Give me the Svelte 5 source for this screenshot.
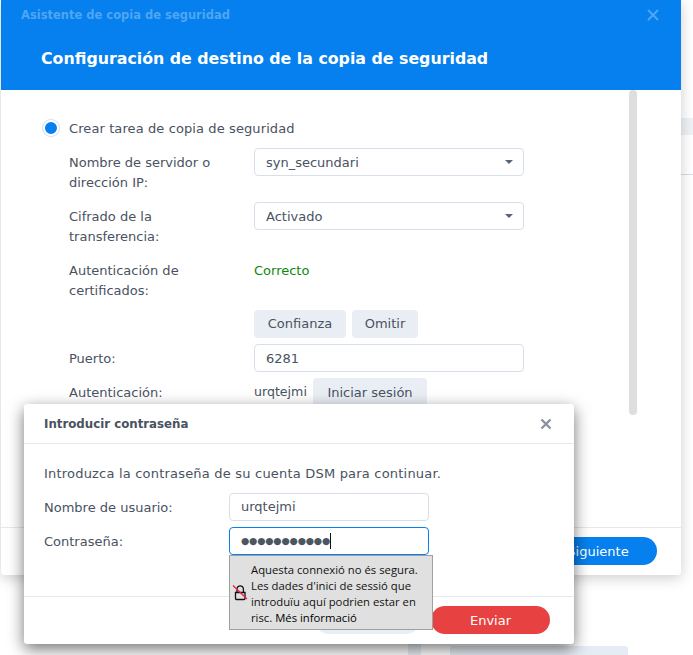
<script>
  const dots = '●'.repeat(11);
</script>

<div class="desk">
  <!-- restos de la ventana de detrás -->
  <div class="bg-strip"></div>
  <div class="bg-line"></div>
  <div class="bg-col"></div>
  <div class="bg-card"></div>

  <section class="wizard">
    <header class="wiz-head">
      <div class="wiz-top">
        <span>Asistente de copia de seguridad</span>
        <svg width="12" height="12" viewBox="0 0 12 12"><path d="M1 1l10 10M11 1L1 11" /></svg>
      </div>
      <h1>Configuración de destino de la copia de seguridad</h1>
    </header>

    <div class="wiz-body">
      <div class="scroll"></div>
      <label class="radio-row">
        <span class="radio"></span>
        Crear tarea de copia de seguridad
      </label>

      <div class="row tall">
        <div class="lbl">Nombre de servidor o<br />dirección IP:</div>
        <div class="field select">syn_secundari<i></i></div>
      </div>
      <div class="row tall">
        <div class="lbl">Cifrado de la<br />transferencia:</div>
        <div class="field select">Activado<i></i></div>
      </div>
      <div class="row tall">
        <div class="lbl">Autenticación de<br />certificados:</div>
        <div class="ok">Correcto</div>
      </div>
      <div class="row">
        <div></div>
        <div class="btns">
          <button class="btn conf">Confianza</button>
          <button class="btn omit">Omitir</button>
        </div>
      </div>
      <div class="row">
        <div class="lbl one">Puerto:</div>
        <div class="field">6281</div>
      </div>
      <div class="row">
        <div class="lbl one">Autenticación:</div>
        <div class="auth">
          <span>urqtejmi</span>
          <button class="btn login">Iniciar sesión</button>
        </div>
      </div>
    </div>

    <footer class="wiz-foot">
      <button class="next">Siguiente</button>
    </footer>
  </section>

  <section class="dialog">
    <header class="dlg-head">
      <span>Introducir contraseña</span>
      <svg width="12" height="12" viewBox="0 0 12 12"><path d="M1.5 1.5l9 9M10.5 1.5l-9 9" /></svg>
    </header>
    <div class="dlg-body">
      <p>Introduzca la contraseña de su cuenta DSM para continuar.</p>
      <div class="dlg-row">
        <span>Nombre de usuario:</span>
        <div class="field wide">urqtejmi</div>
      </div>
      <div class="dlg-row">
        <span>Contraseña:</span>
        <div class="field wide focus"><span class="dots">{dots}</span><b class="caret"></b></div>
      </div>
    </div>
    <footer class="dlg-foot">
      <!-- queda tapado por el aviso -->
      <button class="cancel" aria-label="Cancelar"></button>
      <button class="send">Enviar</button>
    </footer>

    <div class="warn">
      <svg width="16" height="17" viewBox="0 0 16 17">
        <path class="lock" d="M5 8V5a3.2 3.2 0 0 1 6.4 0v3M3.5 8.5h9.5v6a1 1 0 0 1-1 1H4.500a1 1 0 0 1-1-1z" />
        <path class="slash" d="M1 1.500l14 13.500" />
      </svg>
      <div class="warn-text">
        Aquesta connexió no és segura.<br />
        Les dades d'inici de sessió que<br />
        introduïu aquí podrien estar en<br />
        risc. <span>Més informació</span>
      </div>
    </div>
  </section>
</div>

<style>
  :global(body) {
    margin: 0;
    background: #fff;
  }

  .desk {
    position: relative;
    width: 693px;
    height: 655px;
    overflow: hidden;
    font-family: "DejaVu Sans", sans-serif;
    font-size: 13px;
    color: #49525f;
  }

  .bg-strip {
    position: absolute;
    left: 681px;
    top: 118px;
    width: 12px;
    height: 17px;
    background: #eef1f5;
  }
  .bg-line {
    position: absolute;
    left: 681px;
    top: 174px;
    width: 12px;
    height: 1px;
    background: #d3deea;
  }
  .bg-col {
    position: absolute;
    left: 408px;
    top: 640px;
    width: 13px;
    height: 15px;
    background: #e9edf2;
  }
  .bg-card {
    position: absolute;
    left: 450px;
    top: 646px;
    width: 178px;
    height: 12px;
    border-radius: 3px;
    background: #e6ecf4;
  }

  /* ventana del asistente */
  .wizard {
    position: absolute;
    left: 1px;
    top: 0;
    width: 680px;
    height: 575px;
    display: flex;
    flex-direction: column;
    background: #fff;
    border-radius: 0 0 4px 4px;
    box-shadow: 0 3px 14px rgba(0, 0, 0, 0.2);
  }
  .wiz-head {
    height: 90px;
    box-sizing: border-box;
    padding: 0 22px 0 20px;
    background: #0580ee;
    color: #fff;
  }
  .wiz-top {
    display: flex;
    justify-content: space-between;
    align-items: center;
    height: 30px;
    font-size: 11.500px;
    font-weight: 700;
    color: #4fa6f3;
  }
  .wiz-top svg path {
    stroke: #4fa6f3;
    stroke-width: 2;
    fill: none;
  }
  .wiz-head h1 {
    margin: 18px 0 0 20px;
    font-size: 15.800px;
    line-height: 22px;
    font-weight: 700;
  }
  .wiz-body {
    position: relative;
    flex: 1;
    padding: 28px 0 0 42px;
    overflow: hidden;
  }
  .scroll {
    position: absolute;
    left: 628px;
    top: 0;
    width: 8px;
    height: 325px;
    border-radius: 4px;
    background: #dedede;
  }
  .radio-row {
    display: flex;
    align-items: center;
    gap: 10px;
    height: 20px;
    margin-bottom: 10px;
    letter-spacing: 0.1px;
  }
  .radio {
    box-sizing: border-box;
    width: 16px;
    height: 16px;
    border-radius: 50%;
    background: #0580ee;
    border: 2px solid #fff;
    box-shadow: 0 0 0 1px #d3dfec;
  }
  .row {
    display: grid;
    grid-template-columns: 185px 270px;
    height: 28px;
    margin: 0 0 6px 26px;
    line-height: 20px;
  }
  .row.tall {
    height: 44px;
    margin-bottom: 10px;
  }
  .lbl {
    padding-top: 5px;
  }
  .field {
    position: relative;
    box-sizing: border-box;
    height: 28px;
    padding: 0 11px;
    line-height: 28px;
    background: #fff;
    border: 1px solid #d7e0ea;
    border-radius: 4px;
  }
  .select i {
    position: absolute;
    right: 10px;
    top: 11px;
    border: 4.500px solid transparent;
    border-top: 4.500px solid #5a6372;
    border-bottom: 0;
  }
  .ok {
    padding-top: 5px;
    color: #0a8a0a;
  }
  .btns,
  .auth {
    display: flex;
    align-items: flex-start;
    gap: 6px;
  }
  .auth {
    gap: 8px;
  }
  .auth span {
    width: 51px;
    padding-top: 4px;
    font-size: 12.600px;
  }
  .btn {
    height: 28px;
    padding: 0;
    border: 0;
    border-radius: 4px;
    background: #e9eef5;
    color: inherit;
    font: inherit;
  }
  .conf { width: 92px; }
  .omit { width: 66px; }
  .login {
    width: 114px;
    padding-top: 2px;
  }
  .wiz-foot {
    height: 48px;
    display: flex;
    justify-content: flex-end;
    align-items: flex-start;
    box-sizing: border-box;
    padding: 9px 24px 0 0;
    border-top: 1px solid #e3e9f0;
    background: #fff;
    border-radius: 0 0 4px 4px;
  }
  .next {
    width: 118px;
    height: 28px;
    padding: 0;
    border: 0;
    border-radius: 14px;
    background: #0580ee;
    color: #fff;
    font: inherit;
  }

  /* diálogo de contraseña */
  .dialog {
    position: absolute;
    left: 24px;
    top: 404px;
    width: 550px;
    height: 240px;
    display: flex;
    flex-direction: column;
    background: #fff;
    border-radius: 3px;
    box-shadow: 0 5px 16px rgba(0, 0, 0, 0.55);
  }
  .dlg-head {
    height: 40px;
    box-sizing: border-box;
    display: flex;
    justify-content: space-between;
    align-items: center;
    padding: 1px 22px 0 20px;
    border-bottom: 1px solid #e3e9f0;
    font-size: 11.800px;
    font-weight: 700;
  }
  .dlg-head svg path {
    stroke: #8c939c;
    stroke-width: 2.400;
    fill: none;
  }
  .dlg-body {
    flex: 1;
    padding: 20px 0 0 20px;
  }
  .dlg-body p {
    margin: 0 0 9px;
    line-height: 20px;
    letter-spacing: 0.2px;
  }
  .dlg-row {
    display: grid;
    grid-template-columns: 185px 200px;
    align-items: center;
    margin-bottom: 6px;
  }
  .wide {
    width: 200px;
    line-height: 26px;
  }
  .focus {
    display: flex;
    align-items: center;
    border-color: #0580ee;
  }
  .dots {
    font-size: 9.500px;
    letter-spacing: -0.200px;
    color: #4d5560;
  }
  .caret {
    width: 1px;
    height: 16px;
    background: #111;
  }
  .dlg-foot {
    height: 48px;
    box-sizing: border-box;
    display: flex;
    justify-content: flex-end;
    gap: 11px;
    padding: 9px 24px 0 0;
    border-top: 1px solid #e3e9f0;
  }
  .dlg-foot button {
    height: 28px;
    padding: 0;
    border: 0;
    border-radius: 14px;
    font: inherit;
  }
  .cancel {
    width: 105px;
    background: #e9eef5;
  }
  .send {
    width: 119px;
    background: #e84142;
    color: #fff;
  }

  /* aviso del navegador */
  .warn {
    position: absolute;
    left: 205px;
    top: 151px;
    width: 204px;
    height: 75px;
    box-sizing: border-box;
    display: flex;
    align-items: center;
    gap: 4px;
    padding: 0 0 1px 2px;
    background: #e0e0e0;
    border: 1px solid #a0a0a0;
    border-width: 1px 1.500px 1.500px 1px;
    font-family: "Open Sans", sans-serif;
    font-size: 11.300px;
    line-height: 16px;
    color: #111;
    white-space: nowrap;
  }
  .warn-text {
    padding-top: 3px;
    margin-left: -1px;
  }
  .warn span {
    color: #000;
    font-weight: 500;
  }
  .warn svg {
    flex: none;
  }
  .lock {
    fill: none;
    stroke: #111;
    stroke-width: 1.300;
  }
  .slash {
    fill: none;
    stroke: #e8204f;
    stroke-width: 1.300;
  }
</style>
